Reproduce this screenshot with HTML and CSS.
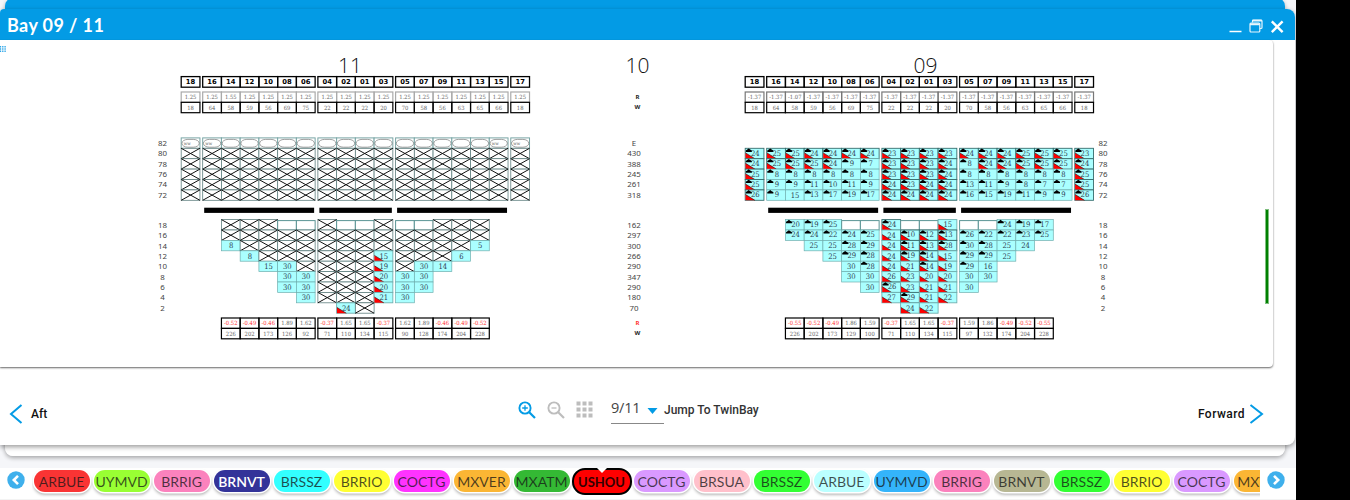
FILE: index.html
```
<!DOCTYPE html>
<html lang="en">
<head>
<meta charset="utf-8">
<title>Bay 09 / 11</title>
<link rel="stylesheet" href="styles.css">
</head>
<body>
<div class="app">
  <div class="back-window"></div>
  <section class="window">
    <header class="titlebar">
      <h1 class="titlebar-text">Bay 09 / 11</h1>
      <div class="window-buttons">
        <svg width="13" height="16" viewBox="0 0 13 16"><path d="M.5 13.500h12" stroke="#fff" stroke-width="1.500"/></svg>
        <svg width="14" height="16" viewBox="0 0 14 16" fill="none" stroke="#e8f6fd" stroke-width="1.200"><path d="M3.500 4.500V3Q3.500 2 4.500 2H12Q13 2 13 3V9.500Q13 10.500 12 10.500H10.800"/><rect x="1" y="5" width="9.800" height="9" rx="1"/><path d="M1 6.200H10.800M3.500 2.600H13" stroke-width="1.900"/></svg>
        <svg width="14" height="16" viewBox="0 0 14 16"><path d="M1.800 3.300L12.600 14.100M12.600 3.300L1.800 14.100" stroke="#fff" stroke-width="2.400"/></svg>
      </div>
    </header>
    <main class="panel">
      <svg class="grip" width="6" height="6" viewBox="0 0 6 6"><path d="M.5 0V6M2.800 0V6M5.100 0V6" stroke="#2aa5e8" stroke-width="1.300" stroke-dasharray="1.500 .7"/></svg>
      <div class="plan">
        <div class="column tiers tiers-left"></div>
        <div class="column bay bay-11"><h2 class="bay-title">11</h2><svg class="stow" id="bay11" width="352" height="275"></svg></div>
        <div class="column middle"><h2 class="bay-title">10</h2></div>
        <div class="column bay bay-09"><h2 class="bay-title">09</h2><svg class="stow" id="bay09" width="352" height="275"></svg></div>
        <div class="column tiers tiers-right"></div>
      </div>
      <div class="marker"></div>
    </main>
    <footer class="toolbar">
      <div class="nav nav-aft"><svg width="14" height="20" viewBox="0 0 14 20"><path d="M12.500 1L2 10L12.500 19" fill="none" stroke="#039be5" stroke-width="2"/></svg><span>Aft</span></div>
      <div class="tools">
        <svg width="18" height="19" viewBox="0 0 18 19" fill="none" stroke="#039be5"><circle cx="7" cy="7" r="5.600" stroke-width="1.900"/><path d="M11 11L17 17" stroke-width="2.200"/><path d="M4.200 7H9.800M7 4.200V9.800" stroke-width="1.300"/></svg>
        <svg width="18" height="19" viewBox="0 0 18 19" fill="none" stroke="#bdbdbd"><circle cx="7" cy="7" r="5.600" stroke-width="1.900"/><path d="M11 11L17 17" stroke-width="2.200"/><path d="M4.500 7H9.500" stroke-width="1.300"/></svg>
        <svg width="17" height="17" viewBox="0 0 17 17"><path d="M2.500 .500V16.500M8.500 .500V16.500M14.500 .500V16.500" stroke="#bdbdbd" stroke-width="4" stroke-dasharray="4 2"/></svg>
      </div>
      <div class="bay-select"><span>9/11</span><svg width="11" height="6" viewBox="0 0 11 6"><path d="M.5 0H10.500L5.500 6Z" fill="#039be5"/></svg></div>
      <span class="jump">Jump To TwinBay</span>
      <div class="nav nav-forward"><span>Forward</span><svg width="15" height="20" viewBox="0 0 15 20"><path d="M1.500 1L13 10L1.500 19" fill="none" stroke="#039be5" stroke-width="2"/></svg></div>
    </footer>
  </section>
  <nav class="ports">
    <svg class="ports-arrow" width="18" height="18" viewBox="0 0 18 18"><circle cx="9" cy="9" r="8.700" fill="#3fb0ec"/><path d="M11 4.800L6.800 9L11 13.200" fill="none" stroke="#fff" stroke-width="2.600"/></svg>
    <div class="chips">
      <span class="chip red">ARBUE</span><span class="chip lime">UYMVD</span><span class="chip pink">BRRIG</span><span class="chip navy">BRNVT</span><span class="chip cyan">BRSSZ</span><span class="chip yellow">BRRIO</span><span class="chip magenta">COCTG</span><span class="chip orange">MXVER</span><span class="chip green">MXATM</span><span class="chip current">USHOU</span><span class="chip violet">COCTG</span><span class="chip rose">BRSUA</span><span class="chip bright">BRSSZ</span><span class="chip ice">ARBUE</span><span class="chip blue">UYMVD</span><span class="chip pink">BRRIG</span><span class="chip olive">BRNVT</span><span class="chip bright">BRSSZ</span><span class="chip yellow">BRRIO</span><span class="chip violet">COCTG</span><span class="chip orange">MXVER</span>
    </div>
    <svg class="ports-arrow" width="18" height="18" viewBox="0 0 18 18"><circle cx="9" cy="9" r="8.700" fill="#3fb0ec"/><path d="M7 4.800L11.200 9L7 13.200" fill="none" stroke="#fff" stroke-width="2.600"/></svg>
  </nav>
</div>
<script src="plan.js"></script>
</body>
</html>
```

FILE: styles.css
```
* { box-sizing: border-box; }
body { margin: 0; background: #000; font-family: "Open Sans", "Noto Sans", sans-serif; }
.app { position: relative; width: 1296px; height: 500px; background: #f5f6f9; overflow: hidden; display: flex; flex-direction: column; padding-top: 9px; }
.back-window { position: absolute; left: 5px; top: -2px; width: 1280px; height: 458px; background: linear-gradient(#039be5 60px, #fff 60px); border-radius: 8px; box-shadow: 0 2px 4px rgba(0,0,0,.32); }
.window { position: relative; width: 1295px; height: 436px; flex: none; background: #fff; border-radius: 4px 8px 8px 0; box-shadow: 0 2px 5px rgba(0,0,0,.4); display: flex; flex-direction: column; }
.titlebar { height: 31px; flex: none; background: #039be5; border-radius: 4px 8px 0 0; display: flex; justify-content: space-between; padding: 0 11px 0 7px; }
.titlebar-text { margin: 0; font: 700 18px/32px Lato, sans-serif; letter-spacing: .4px; color: #fff; }
.window-buttons { display: flex; gap: 7px; padding-top: 9px; }
.panel { position: relative; width: 1273px; height: 327px; flex: none; background: #fff; border-radius: 0 4px 4px 0; box-shadow: 0 1px 2px rgba(0,0,0,.6); }
.grip { position: absolute; left: 0; top: 6px; }
.marker { position: absolute; left: 1265px; top: 169px; width: 4px; height: 95px; background: #008000; border: 1px solid #7fbf7f; border-width: 1px 1px 1px .5px; }
.plan { display: flex; height: 100%; }
.column { flex: none; }
.bay-title { margin: 0; height: 30px; padding-top: 9px; font: 300 21px/32px "Open Sans", sans-serif; color: #111; text-align: center; }
.bay { width: 352px; }
.bay-11 .bay-title { padding-right: 12px; }
.bay-09 .bay-title { padding-left: 11px; }
.middle { width: 212px; }
.middle .bay-title { padding-right: 1px; }
.tiers-left { width: 180px; padding: 98px 0 0 145px; text-align: center; }
.tiers-right { width: 40px; padding: 98px 26px 0 0; text-align: center; }
.tier { height: 10.330px; font: 7.900px/10.330px "Noto Sans", sans-serif; color: #444; }
.tier-gap { height: 20px; }
.middle .tier { text-align: center; padding-right: 8px; }
.sum-labels { font: 700 6px/10.400px "Noto Sans", sans-serif; color: #222; text-align: center; padding-right: 1px; }
.sum-labels.top { padding-top: 21.500px; height: 68px; }
.sum-labels.bottom { padding-top: 5px; }
.alert { color: #f33; }
.stow { display: block; overflow: visible; }
.stow text { text-anchor: middle; font-family: "DejaVu Serif", serif; font-stretch: condensed; }
.stow .head { font: 700 6.800px "DejaVu Sans", sans-serif; fill: #000; }
.stow .sum { font-size: 5.800px; fill: #666; }
.stow .neg { fill: #f33; }
.stow .num { font-size: 7.600px; fill: #345; }
.stow .tag { font-size: 4.500px; fill: #555; }
.toolbar { display: flex; flex: 1; position: relative; align-items: flex-start; padding: 33px 31px 0 9px; }
.nav { display: flex; gap: 8px; align-items: center; font: 500 12px/20px Roboto, sans-serif; color: #111; margin-top: 4px; }
.nav-aft { width: 509px; }
.nav-forward { margin-left: auto; gap: 4px; letter-spacing: .45px; }
.tools { display: flex; gap: 11px; width: 93px; padding-top: 1px; }
.bay-select { display: flex; align-items: center; justify-content: space-between; width: 53px; height: 24px; border-bottom: 1px solid #888; padding: 0 6px 7px 0; font-size: 14.500px; line-height: 16px; color: #444; letter-spacing: -.2px; }
.bay-select svg { margin-top: 5px; }
.jump { margin-left: 0; font: 500 12px/20px Roboto, sans-serif; color: #333; }
.ports { position: relative; margin-top: 23px; height: 32px; background: #fff; display: flex; padding: 0 11px 0 7px; justify-content: space-between; border-bottom: 1px solid #f3f3f3; }
.ports-arrow { margin-top: 3px; flex: none; }
.chips { display: flex; gap: 4px; width: 1228px; padding: 2px 0 0 2px; margin-right: 6px; margin-left: 5px; overflow: hidden; flex: none; }
.chip { flex: none; width: 56px; height: 22px; border-radius: 11px; font: 14px/23px Lato, sans-serif; letter-spacing: 0; color: rgba(20,20,20,.75); display: flex; justify-content: center; box-shadow: 0 0 0 1.500px #fff, 0 2px 3px 1px rgba(0,0,0,.28); }
.red { background: #f93434; } .lime { background: #99ff33; } .pink { background: #fb82bd; }
.navy { background: #333399; color: #fff; font-weight: 600; } .cyan { background: #33ffff; } .yellow { background: #ffff33; }
.magenta { background: #ff33ff; } .orange { background: #fbb634; } .green { background: #34b934; }
.violet { background: #da99ff; } .rose { background: #ffc0cb; } .bright { background: #33ff33; }
.ice { background: #bbffff; } .blue { background: #34b4fb; } .olive { background: #b7b793; }
.current { position: relative; width: 60px; height: 27px; margin: -2px -2px 0; border: 2px solid #000; border-radius: 13px; background: #ff0000; color: #300; font-weight: 700; font-size: 13px; letter-spacing: 0; line-height: 25px; box-shadow: none; }
.current::before { content: ""; position: absolute; top: -3px; left: 22px; border: 6px solid transparent; border-top-color: #fff; border-bottom: 0; }
```

FILE: plan.js
```
const CELL = 18.74, GAP = 2.75, ROW = 10.4, X0 = 1.2;
const COLUMNS = ['18', '16', '14', '12', '10', '08', '06', '04', '02', '01', '03', '05', '07', '09', '11', '13', '15', '17'];
const GROUP_STARTS = [1, 7, 11, 17];
const WEIGHTS = '18 64 58 59 56 69 75 22 22 22 20 70 58 56 63 65 66 18';

/* Cell codes: x crossed, e empty outline, o oval, ow oval with tag,
   digits = container weight, r = red corner, h = hatted, . = no cell */
const BAYS = {
  bay11: {
    topIndex: '1.25 1.25 1.55' + ' 1.25'.repeat(15),
    deck: ['ow ow ' + 'o '.repeat(14) + 'ow ow'].concat(Array(5).fill('x '.repeat(18).trim())),
    hold: [
      'x x x e e x e e x e e x x x',
      'x x x x x x x x x x x x x x',
      '8 x x x x x x x x x x x x 5',
      '. 8 x x x x x x 15r x x x 6 .',
      '. . 15 30 x x x x 19r x 30 14 . .',
      '. . . 30 30 x x x 20r 30 30 . . .',
      '. . . 30 30 x x x 20r 30 30 . . .',
      '. . . . 30 x x x 21r 30 . . . .',
      '. . . . . . 24r x . . . . . .'
    ],
    lowIndex: '-0.52 -0.49 -0.46 1.89 1.62 -0.37 1.65 1.65 -0.37 1.62 1.89 -0.46 -0.49 -0.52',
    lowWeight: '226 202 173 126 92 71 110 134 115 90 128 174 204 228'
  },
  bay09: {
    topIndex: '-1.37 -1.37 -1.07' + ' -1.37'.repeat(15),
    deck: [
      '. '.repeat(18).trim(),
      '24rh 25rh 25rh 24rh 24rh 24rh 24rh 23rh 23rh 23rh 23rh 24rh 24rh 24rh 25rh 25rh 25rh 23rh',
      '24rh 25rh 25rh 25rh 24rh 9h 7h 23rh 23rh 23rh 24rh 8h 24rh 24rh 25rh 25rh 25rh 24rh',
      '25rh 8h 8h 8h 8h 8h 8h 23rh 23rh 23rh 24rh 8h 8h 8h 8h 8h 8h 25rh',
      '25rh 9h 9h 11h 10h 11h 9h 24rh 23rh 24rh 24rh 13h 11h 9h 8h 7h 7h 25rh',
      '26rh 9h 15 13h 17h 19h 17h 24rh 24rh 24rh 24rh 16h 15h 19h 11h 9h 9h 26rh'
    ],
    hold: [
      '20h 19h 25h e e 24rh e e 15r e e 24h 19h 17h',
      '24h 24h 22h 24h 25h 24r 10rh 12rh 13rh 26h 22h 22h 23h 25h',
      '. 25 25 28h 29h 24r 11rh 13rh 28rh 30h 28h 25 24 .',
      '. . 25 29h 28h 24r 19rh 14rh 15r 29h 29h 25 . .',
      '. . . 30 28h 24r 21r 14rh 19r 29h 16 . . .',
      '. . . 30 30 26r 23r 20r 20r 30 30 . . .',
      '. . . . 30 26rh 23r 21r 21r 30 . . . .',
      '. . . . . 27r 29rh 21r 22r . . . . .',
      '. . . . . . 24r 22r . . . . . .'
    ],
    lowIndex: '-0.55 -0.52 -0.49 1.86 1.59 -0.37 1.65 1.65 -0.37 1.59 1.86 -0.49 -0.52 -0.55',
    lowWeight: '226 202 173 129 100 71 110 134 115 97 132 174 204 228'
  }
};

const columnX = i => X0 + i * CELL + GROUP_STARTS.filter(s => i >= s).length * GAP;

const box = (x, y, h, stroke, width, fill = 'none') =>
  `<rect x="${x}" y="${y}" width="${CELL}" height="${h}" fill="${fill}" stroke="${stroke}" stroke-width="${width}"/>`;
const label = (x, y, cls, value) => `<text class="${cls}" x="${x + CELL / 2}" y="${y}">${value}</text>`;

function sumRow(values, first, y, stroke) {
  return values.split(' ').map((v, i) => {
    const x = columnX(i + first);
    return box(x, y, ROW, stroke, 1.2) + label(x, y + 7.4, v < 0 && first ? 'sum neg' : 'sum', v);
  }).join('');
}

function slot(code, x, y) {
  if (code === '.') return '';
  if (code === 'x') return box(x, y, ROW, '#5f7f7f', .8, '#fff') +
    `<path d="M${x} ${y}l${CELL} ${ROW}m0 ${-ROW}l${-CELL} ${ROW}" stroke="#111" stroke-width="1"/>`;
  if (code === 'e') return box(x, y + 1, ROW - 1, '#5a9494', 1, '#fff');
  if (code[0] === 'o') return box(x, y, ROW, '#78a5a5', 1, '#fff') +
    `<rect x="${x + .7}" y="${y + 1.5}" width="${CELL - 1.4}" height="7.800" rx="6" fill="none" stroke="#777" stroke-width=".7"/>` +
    (code === 'ow' ? `<text class="tag" x="${x + 6}" y="${y + 7}">ww</text>` : '');
  const red = code.includes('r'), hat = code.includes('h');
  return box(x, y, ROW, red && hat ? '#376d6d' : '#6fafaf', red ? .9 : .7, '#aaffff') +
    (red ? `<path d="M${x + .3} ${y + 4.6}V${y + ROW}H${x + 9.7}Z" fill="#f00"/>` +
      `<path d="M${x + .3} ${y + 4.6}L${x + 9.7} ${y + ROW}" stroke="#300" stroke-width=".6"/>` : '') +
    (hat ? `<path d="M${x + .6} ${y + 3.6}V${y + 2.2}L${x + 2} ${y + 1.3}L${x + 3.5} ${y + .2}L${x + 5} ${y + 1.3}L${x + 6.7} ${y + 2.2}V${y + 3.6}Z"/>` : '') +
    label(x + (hat ? .8 : .3), y + (hat ? 7.4 : 7.8), 'num', parseInt(code, 10));
}

const block = (rows, first, y) => rows.map((row, r) =>
  row.split(' ').map((code, i) => slot(code, columnX(i + first), y + r * ROW)).join('')).join('');

const hatch = (first, count) =>
  `<rect x="${columnX(first) + 1.5}" y="137.700" width="${count * CELL - 2.5}" height="5.200"/>`;

for (const [id, bay] of Object.entries(BAYS)) {
  const cols = COLUMNS.map((c, i) => box(columnX(i), 6.6, 10.6, '#000', 1.3) + label(columnX(i), 14.4, 'head', c)).join('');
  document.getElementById(id).innerHTML = cols +
    sumRow(bay.topIndex, 0, 22, id === 'bay11' ? '#aaa' : '#777') + sumRow(WEIGHTS, 0, 32.3, '#000') +
    block(bay.deck, 0, 67.9) + hatch(1, 6) + hatch(7, 4) + hatch(11, 6) +
    block(bay.hold, 2, 149.6) +
    sumRow(bay.lowIndex, 2, 248, '#000') + sumRow(bay.lowWeight, 2, 258.4, '#000');
}

const tierList = (deck, hold) => {
  const rows = list => list.split(' ').map(t => `<div class="tier">${t}</div>`).join('');
  return rows(deck) + '<div class="tier-gap"></div>' + rows(hold);
};
document.querySelectorAll('.tiers').forEach(el => {
  el.innerHTML = tierList('82 80 78 76 74 72', '18 16 14 12 10 8 6 4 2');
});
document.querySelector('.middle').insertAdjacentHTML('beforeend',
  '<div class="sum-labels top"><div>R</div><div>W</div></div>' +
  tierList('E 430 388 245 261 318', '162 297 300 266 290 347 290 180 70') +
  '<div class="sum-labels bottom"><div class="alert">R</div><div>W</div></div>');
```
